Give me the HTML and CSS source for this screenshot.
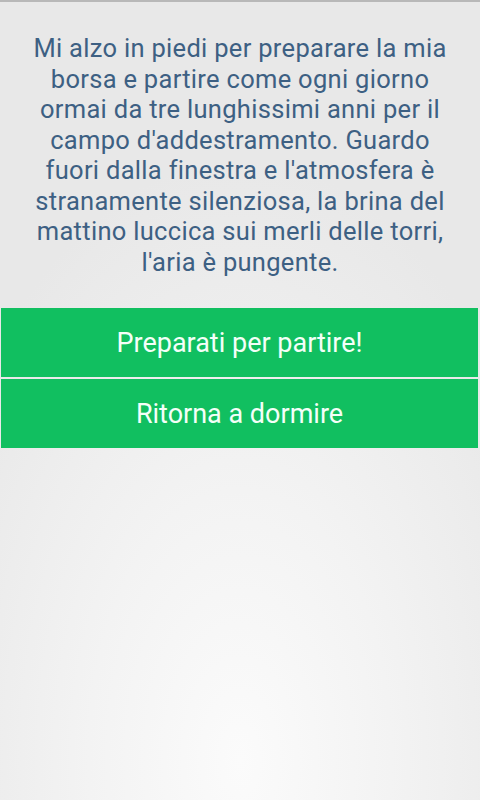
FILE: index.html
```html
<html>
    <head>
        <title>Storia</title>
        <link rel="stylesheet" href="styles.css">
    </head>
    <body>
        <div class="screen">
            <p class="story">Mi alzo in piedi per preparare la mia borsa e partire come ogni giorno ormai da tre lunghissimi anni per il campo d'addestramento. Guardo fuori dalla finestra e l'atmosfera è stranamente silenziosa, la brina del mattino luccica sui merli delle torri, l'aria è pungente.</p>
            <div class="choices">
                <button class="choice">Preparati per partire!</button>
                <button class="choice">Ritorna a dormire</button>
            </div>
        </div>
    </body>
</html>
```

FILE: styles.css
```css
html, body {
    margin: 0;
    height: 100%;
}
body {
    font-family: Roboto, "Noto Sans", sans-serif;
    background: radial-gradient(ellipse 70% 75% at 50% 95%, #fbfbfb 0%, #f3f3f3 45%, #e8e8e8 100%);
    border-top: 2px solid #b8b8b8;
    box-sizing: border-box;
}
.screen {
    display: flex;
    flex-direction: column;
}
.story {
    margin: 0;
    padding: 31px 22px 0;
    color: #3d6083;
    font-size: 25.5px;
    line-height: 30.5px;
    letter-spacing: 0.3px;
    font-variant-ligatures: none;
    text-align: center;
}
.choices {
    display: flex;
    flex-direction: column;
    gap: 2px;
    margin-top: 31px;
    padding: 0 2px 0 1px;
}
.choice {
    height: 69px;
    border: none;
    background: #11bf60;
    color: #f4fff8;
    font-family: Roboto, "Noto Sans", sans-serif;
    font-size: 27px;
    padding: 0;
}
```
